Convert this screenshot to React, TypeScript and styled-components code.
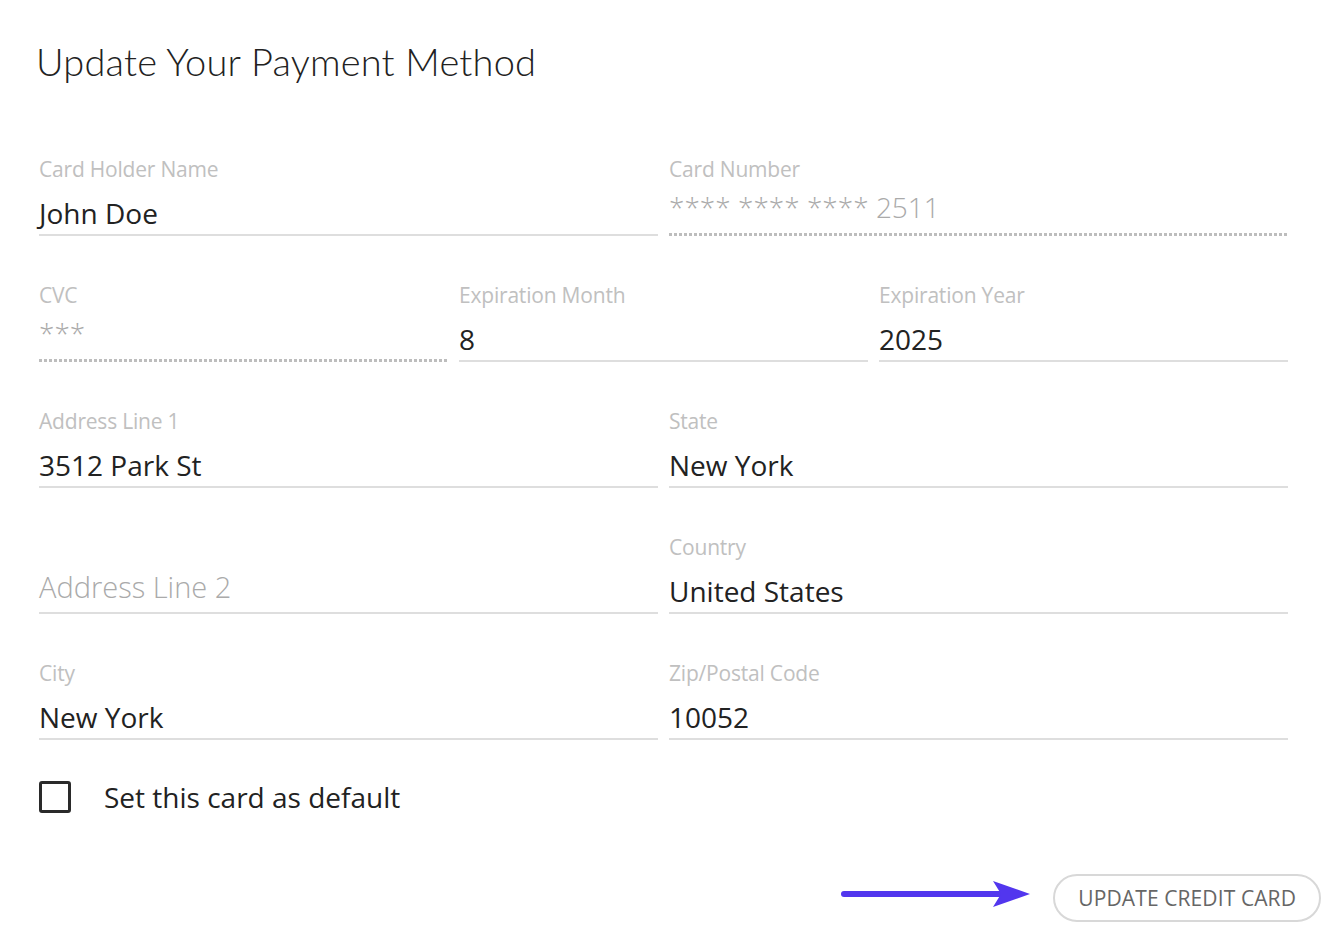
import React from 'react';
import styled, { createGlobalStyle } from 'styled-components';

const GlobalStyle = createGlobalStyle`
    body {
        margin: 0;
        background: #fff;
        font-family: "Open Sans", "Liberation Sans", sans-serif;
    }
`;

const Page = styled.div`
    width: 1330px;
    height: 933px;
    box-sizing: border-box;
    padding: 36px 42px 0 39px;
`;

const Title = styled.h1`
    margin: 0 0 0 -3px;
    font-family: Lato, "Open Sans", sans-serif;
    font-weight: 300;
    font-size: 38px;
    line-height: 50px;
    color: #222;
    letter-spacing: 0.2px;
`;

const Grid = styled.div`
    display: grid;
    grid-template-columns: repeat(6, 1fr);
    column-gap: 11px;
    row-gap: 47px;
    margin-top: 71px;
    width: 1249px;
`;

const Field = styled.div<{ $span: number }>`
    grid-column: span ${p => p.$span};
    display: flex;
    flex-direction: column;
`;

const Label = styled.div`
    font-size: 21px;
    font-weight: 400;
    line-height: 24px;
    height: 24px;
    color: #c0c0c0;
    letter-spacing: -0.2px;
`;

const Value = styled.div<{ $disabled?: boolean; $placeholder?: boolean }>`
    box-sizing: border-box;
    height: 55px;
    padding-top: ${p => (p.$disabled ? '6px' : p.$placeholder ? '8px' : '12px')};
    font-size: ${p => (p.$placeholder ? '29px' : '28px')};
    line-height: 40px;
    color: ${p => (p.$disabled || p.$placeholder ? '#aaa' : '#222')};
    font-weight: ${p => (p.$disabled || p.$placeholder ? 300 : 400)};
    border-bottom: ${p => (p.$disabled ? 'none' : '2px solid #dedede')};
    background: ${p => (p.$disabled
        ? 'linear-gradient(to right, #bdbdbd 3px, transparent 3px) left bottom / 5px 3px repeat-x'
        : 'none')};
    white-space: nowrap;
`;

const CheckRow = styled.label`
    display: flex;
    align-items: center;
    gap: 33px;
    margin-top: 38px;
    font-size: 28px;
    color: #222;
`;

const Box = styled.span`
    width: 26px;
    height: 26px;
    border: 3px solid #2a2a2a;
    border-radius: 3px;
`;

const Footer = styled.div`
    display: flex;
    justify-content: flex-end;
    align-items: center;
    gap: 22px;
    margin-top: 58px;
    margin-right: -33px;
`;

const Arrow = styled.svg`
    margin-bottom: 8px;
`;

const Button = styled.button`
    height: 48px;
    padding: 0 23px;
    border: 2px solid #d8d8d8;
    border-radius: 24px;
    background: #fff;
    font-family: "Open Sans", sans-serif;
    font-size: 21px;
    color: #666;
    letter-spacing: 0.1px;
`;

interface FieldDef {
    label?: string;
    value: string;
    span: number;
    disabled?: boolean;
    placeholder?: boolean;
}

const fields: FieldDef[] = [
    { label: 'Card Holder Name', value: 'John Doe', span: 3 },
    { label: 'Card Number', value: '**** **** **** 2511', span: 3, disabled: true },
    { label: 'CVC', value: '***', span: 2, disabled: true },
    { label: 'Expiration Month', value: '8', span: 2 },
    { label: 'Expiration Year', value: '2025', span: 2 },
    { label: 'Address Line 1', value: '3512 Park St', span: 3 },
    { label: 'State', value: 'New York', span: 3 },
    { value: 'Address Line 2', span: 3, placeholder: true },
    { label: 'Country', value: 'United States', span: 3 },
    { label: 'City', value: 'New York', span: 3 },
    { label: 'Zip/Postal Code', value: '10052', span: 3 },
];

const App: React.FC = () => {
    return (
        <Page>
            <GlobalStyle />
            <Title>Update Your Payment Method</Title>
            <Grid>
                {fields.map((f, i) => (
                    <Field key={i} $span={f.span}>
                        <Label>{f.label || ''}</Label>
                        <Value $disabled={f.disabled} $placeholder={f.placeholder}>{f.value}</Value>
                    </Field>
                ))}
            </Grid>
            <CheckRow>
                <Box />
                Set this card as default
            </CheckRow>
            <Footer>
                <Arrow width="190" height="30" viewBox="0 0 190 30">
                    <line x1="3" y1="15" x2="165" y2="15" stroke="#5236ee" strokeWidth="6" strokeLinecap="round" />
                    <polygon points="152,2 189,15 152,28 160,15" fill="#5236ee" />
                </Arrow>
                <Button>UPDATE CREDIT CARD</Button>
            </Footer>
        </Page>
    );
};

export default App;
